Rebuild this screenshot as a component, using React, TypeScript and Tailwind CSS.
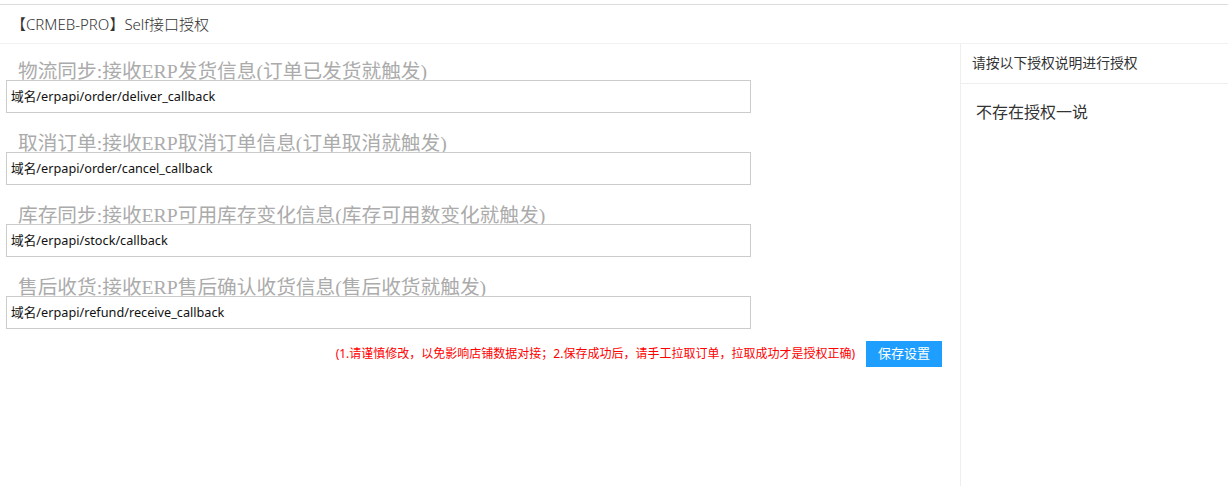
import React from "react";

const items = [
  { label: "物流同步:接收ERP发货信息(订单已发货就触发)", value: "域名/erpapi/order/deliver_callback" },
  { label: "取消订单:接收ERP取消订单信息(订单取消就触发)", value: "域名/erpapi/order/cancel_callback" },
  { label: "库存同步:接收ERP可用库存变化信息(库存可用数变化就触发)", value: "域名/erpapi/stock/callback" },
  { label: "售后收货:接收ERP售后确认收货信息(售后收货就触发)", value: "域名/erpapi/refund/receive_callback" },
];

const sans = { fontFamily: '"Noto Sans", "Noto Sans CJK SC", sans-serif' };

export default function App() {
  return (
    <div
      className="w-[1228px] h-[486px] bg-white flex flex-col overflow-hidden text-[#333]"
      style={sans}
    >
      <div className="h-[4px] shrink-0" />
      <div className="h-[40px] shrink-0 border-t border-b border-t-[#dcdcdc] border-b-[#f2f2f2] flex items-center pl-[11px] text-[15px] font-light text-[#333]">
        【CRMEB-PRO】Self接口授权
      </div>
      <div className="flex flex-1 min-h-0">
        <div className="w-[961px] shrink-0 border-r border-[#eeeeee] pl-[6px] pr-[18px] flex flex-col">
          <div className="flex flex-col gap-[3px]">
            {items.map((it) => (
              <div key={it.value} className="flex flex-col">
                <div
                  className="h-[36px] overflow-hidden pl-[12px] pt-[17px] text-[19.7px] leading-[20px] text-[#ababab] whitespace-nowrap"
                  style={{ fontFamily: '"Liberation Serif", "Noto Sans CJK SC", serif' }}
                >
                  {it.label}
                </div>
                <div className="w-[745px] h-[33px] border border-[#cccccc] bg-white flex items-center pl-[4px] text-[12.7px] text-[#111]">
                  {it.value}
                </div>
              </div>
            ))}
          </div>
          <div className="flex justify-end items-center gap-[11px] mt-[12px]">
            <span className="text-[12px] text-[#ff0000] leading-[16px]">
              (1.请谨慎修改，以免影响店铺数据对接；2.保存成功后，请手工拉取订单，拉取成功才是授权正确)
            </span>
            <button className="w-[76px] h-[26px] bg-[#1e9fff] text-white text-[13px] flex items-center justify-center">
              保存设置
            </button>
          </div>
        </div>
        <div className="flex-1 flex flex-col">
          <div className="h-[40px] border-b border-[#eeeeee] flex items-center pl-[11px] text-[13.8px] text-[#333]">
            请按以下授权说明进行授权
          </div>
          <div className="pl-[15px] pt-[20px] text-[16px] leading-[16px] text-[#333]">不存在授权一说</div>
        </div>
      </div>
    </div>
  );
}
